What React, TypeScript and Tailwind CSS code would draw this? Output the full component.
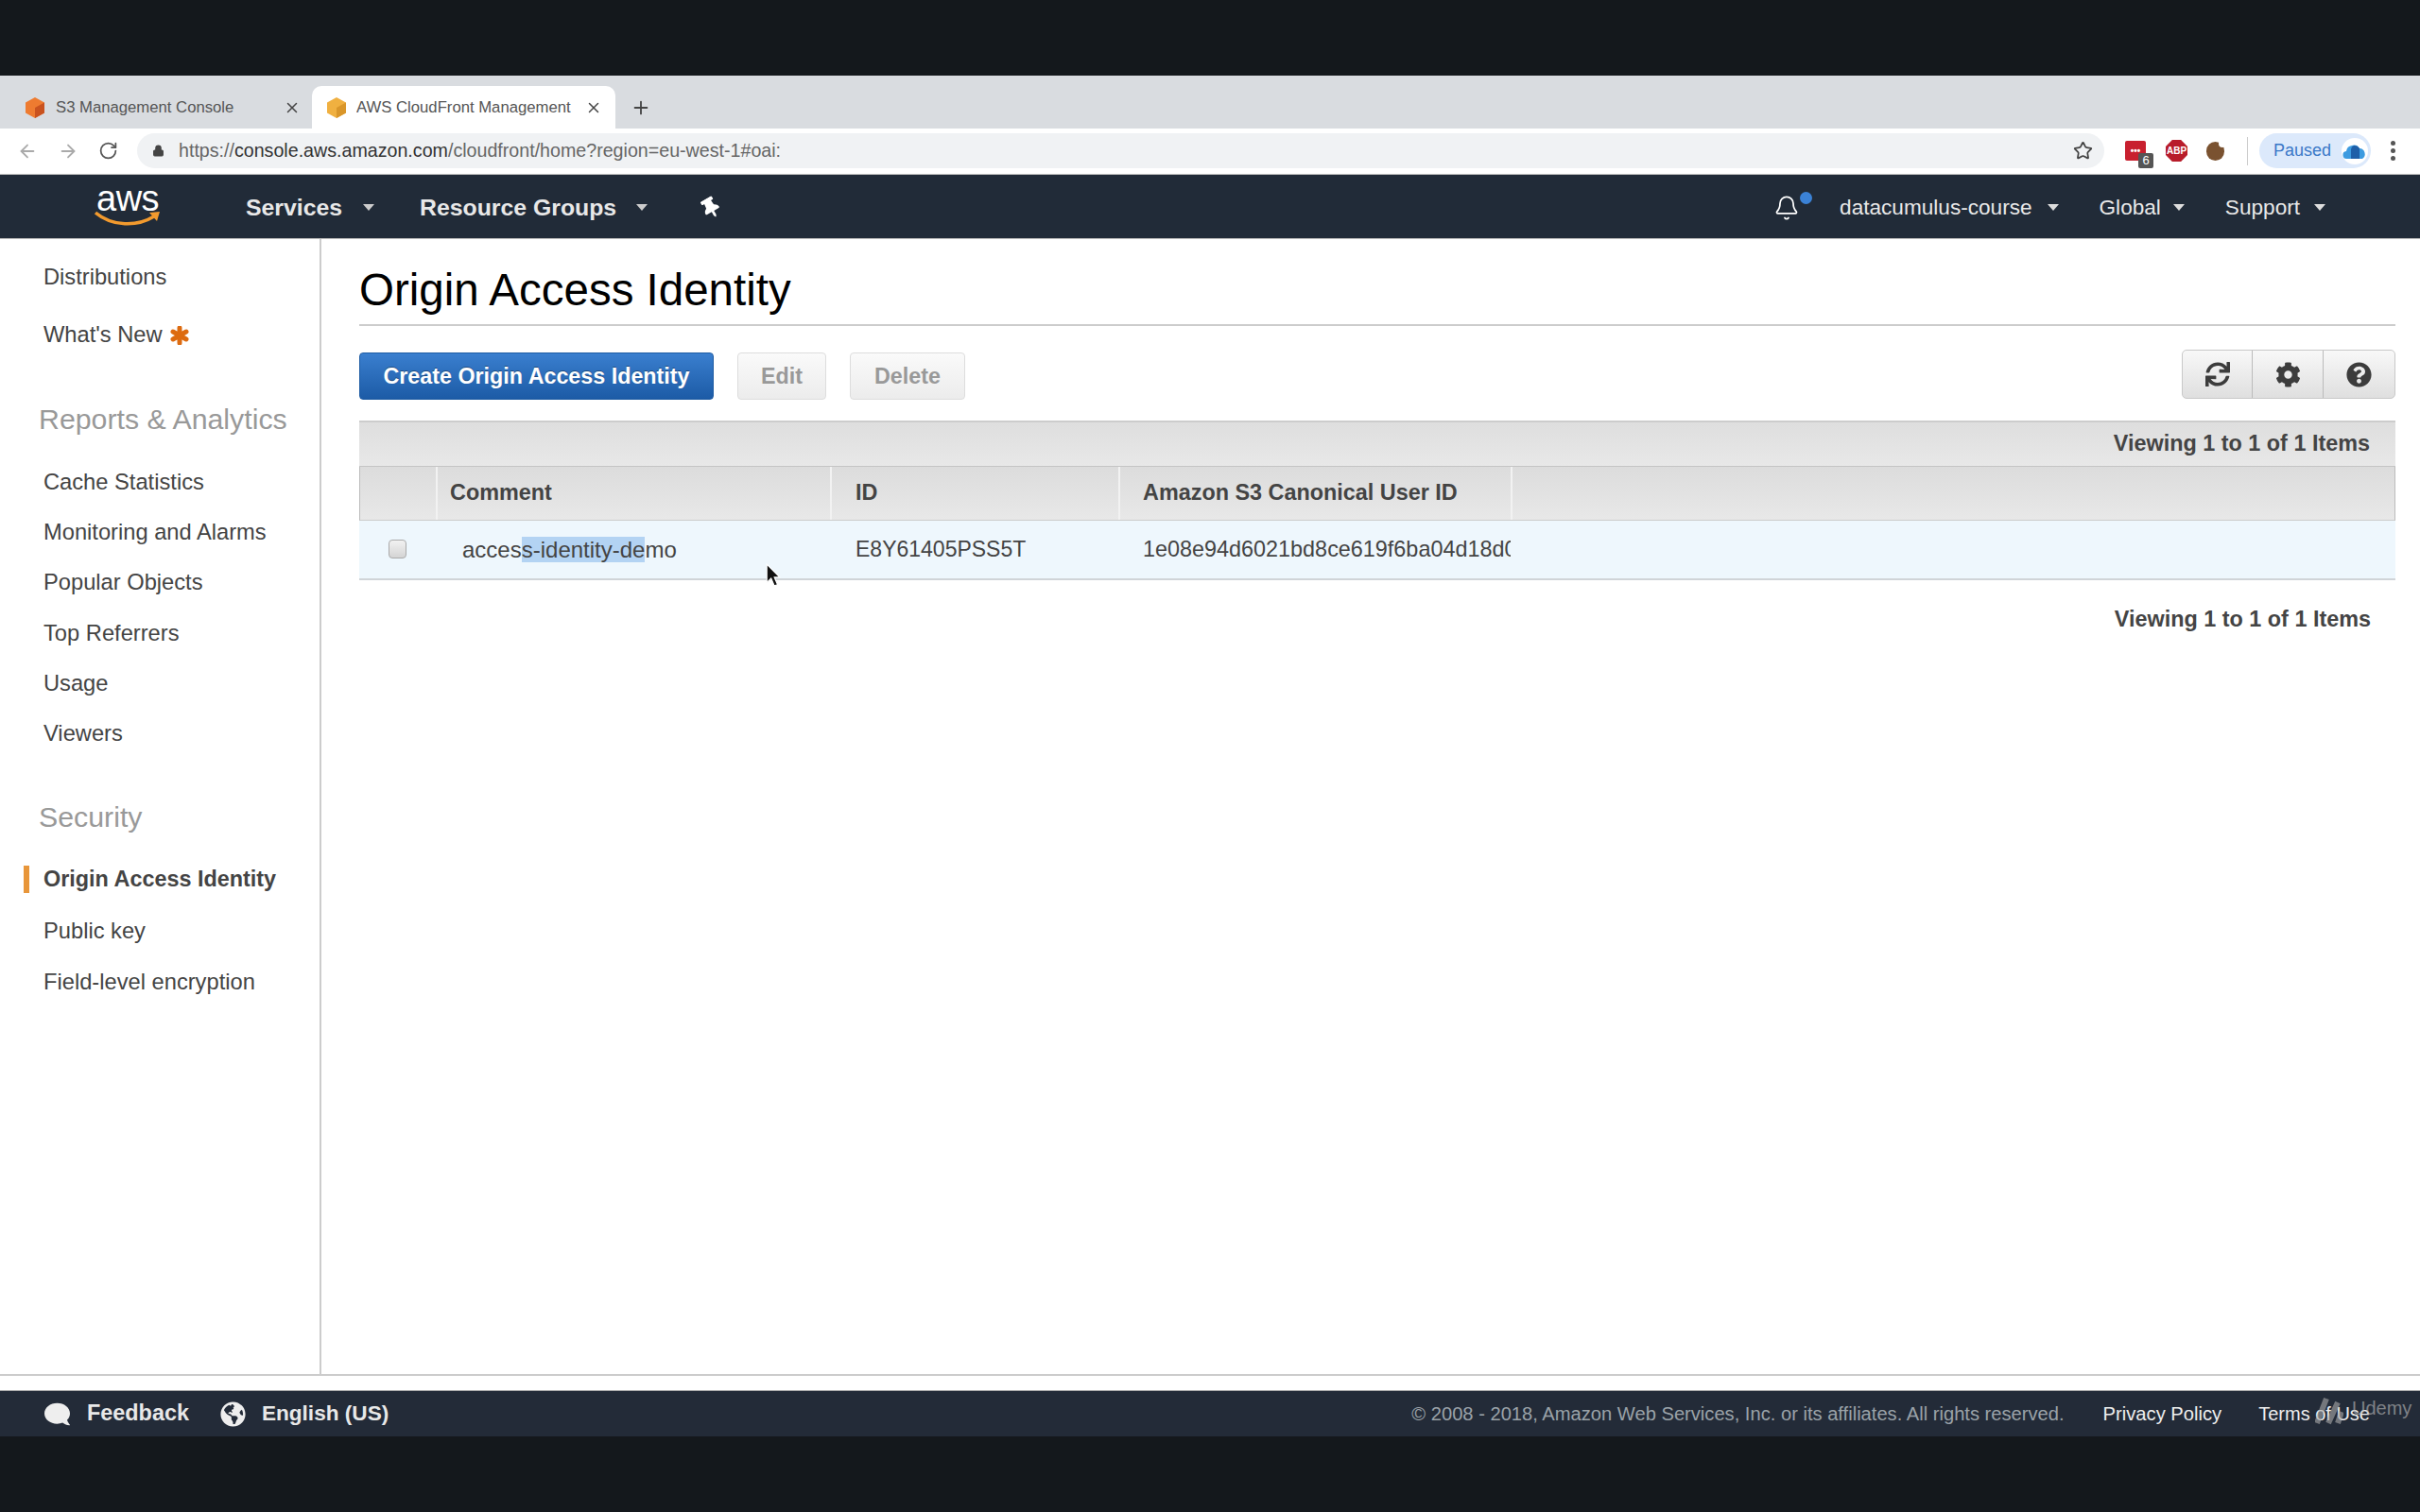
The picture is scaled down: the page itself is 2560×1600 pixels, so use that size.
import { ArrowLeft, ArrowRight, RotateCw, Star, Plus, X, Bell, Lock } from "lucide-react";
import { FaCog, FaComment, FaGlobeAmericas, FaQuestionCircle, FaSync, FaThumbtack } from "react-icons/fa";

function Caret({ className }: { className?: string }) {
    return (
        <svg viewBox="0 0 14 9" className={`w-[14px] h-[9px] ${className ?? ""}`}>
            <path d="M1 1h12L7 8z" fill="currentColor" />
        </svg>
    );
}

function Cube({ color, dark }: { color: string; dark: string }) {
    return (
        <svg viewBox="0 0 22 24" className="w-[22px] h-[24px] shrink-0">
            <path d="M11 1l10 5.500v11L11 23 1 17.500v-11z" fill={color} />
            <path d="M11 12l10-5.500v11L11 23z" fill={dark} />
        </svg>
    );
}

function SideItem({ label, active }: { label: string; active?: boolean }) {
    return (
        <div className={`h-[53.2px] flex items-center pl-[46px] text-[#444] ${active ? "text-[23.4px] font-bold relative" : "text-[23.7px]"}`}>
            {active && <div className="absolute left-[25px] top-[12px] w-[6px] h-[29px] bg-[#e8963a]" />}
            {label}
        </div>
    );
}

const reportItems = ["Cache Statistics", "Monitoring and Alarms", "Popular Objects", "Top Referrers", "Usage", "Viewers"];

export default function App() {
    return (
        <div className="w-[2560px] h-[1600px] overflow-hidden flex flex-col bg-white font-['Liberation_Sans',Arial,sans-serif]">
            <div className="h-[80px] shrink-0 bg-[#14181c]" />

            {/* Browser tabs */}
            <div className="h-[56px] shrink-0 bg-[#d9dce0] flex items-end text-[16.7px] text-[#555]">
                <div className="w-[330px] h-[45px] flex items-center pl-[26px] pr-[12px]">
                    <Cube color="#ee7b30" dark="#c9521f" />
                    <span className="ml-[11px] flex-1">S3 Management Console</span>
                    <X className="w-[18px] h-[18px] text-[#444]" />
                </div>
                <div className="w-[321px] h-[45px] bg-white rounded-t-[10px] flex items-center pl-[15px] pr-[14px]">
                    <Cube color="#f0b040" dark="#d9962a" />
                    <span className="ml-[10px] w-[228px] overflow-hidden whitespace-nowrap">AWS CloudFront Management</span>
                    <X className="ml-auto w-[18px] h-[18px] text-[#444]" />
                </div>
                <div className="h-[45px] flex items-center ml-[16px]">
                    <Plus className="w-[22px] h-[22px] text-[#444]" />
                </div>
            </div>

            {/* Browser toolbar */}
            <div className="h-[49px] shrink-0 bg-white flex items-start pt-[5px] border-b border-[#bbb]">
                <div className="w-[145px] h-[37px] flex items-center pl-[18px] gap-[21px]">
                    <ArrowLeft className="w-[22px] h-[22px] text-[#aaa]" />
                    <ArrowRight className="w-[22px] h-[22px] text-[#aaa]" />
                    <RotateCw className="w-[21px] h-[21px] text-[#555]" />
                </div>
                <div className="w-[2081px] h-[37px] rounded-full bg-[#f0f2f4] flex items-center pl-[16px] pr-[12px]">
                    <Lock className="w-[13px] h-[15px] text-[#444] fill-[#444]" />
                    <span className="ml-[15px] text-[19.65px] text-[#666]">
                        https://<span className="text-[#333]">console.aws.amazon.com</span>/cloudfront/home?region=eu-west-1#oai:
                    </span>
                    <Star className="ml-auto w-[21px] h-[21px] text-[#444]" />
                </div>
                <div className="h-[37px] flex items-center relative ml-[22px] w-[22px]">
                    <div className="w-[22px] h-[21px] bg-[#c8202f] rounded-[2px] flex items-center justify-center text-white text-[10px] font-bold leading-none">•••</div>
                    <div className="absolute left-[14px] top-[21px] w-[16px] h-[16px] bg-[#555] rounded-[2px] text-white text-[13px] leading-[16px] text-center">6</div>
                </div>
                <div className="h-[37px] flex items-center ml-[21px]">
                    <div className="w-[23px] h-[23px] bg-[#b81c2a] text-white text-[10px] font-bold flex items-center justify-center [clip-path:polygon(30%_0,70%_0,100%_30%,100%_70%,70%_100%,30%_100%,0_70%,0_30%)]">ABP</div>
                </div>
                <div className="h-[37px] flex items-center ml-[20px]">
                    <div className="w-[19px] h-[20px] rounded-full bg-[#7a5230] relative">
                        <div className="absolute -right-[2px] -top-[2px] w-[8px] h-[8px] rounded-full bg-white" />
                    </div>
                </div>
                <div className="h-[30px] w-[1px] bg-[#ccc] ml-[24px] mt-[4px]" />
                <div className="ml-[12px] w-[118px] h-[37px] rounded-full bg-[#dce9fb] flex items-center pl-[15px]">
                    <span className="text-[18px] text-[#3a78c8]">Paused</span>
                    <div className="ml-[11px] w-[28px] h-[28px] rounded-full bg-white flex items-center justify-center">
                        <svg viewBox="0 0 26 20" className="w-[26px] h-[20px]">
                            <path d="M5 18a4 4 0 0 1-1-8 7 7 0 0 1 6-6 7 7 0 0 1 8 3 6 6 0 0 1 3 11z" fill="#3d9be0" />
                            <path d="M9 18V8a5 5 0 0 1 3-4 7 7 0 0 1 6 3v11z" fill="#1f5fa8" />
                        </svg>
                    </div>
                </div>
                <div className="h-[37px] ml-[21px] flex flex-col items-center justify-center gap-[3px]">
                    <div className="w-[5px] h-[5px] rounded-full bg-[#555]" />
                    <div className="w-[5px] h-[5px] rounded-full bg-[#555]" />
                    <div className="w-[5px] h-[5px] rounded-full bg-[#555]" />
                </div>
            </div>

            {/* AWS nav */}
            <div className="h-[67px] shrink-0 bg-[#212b38] flex items-center pt-[2px] text-[22.6px] text-[#e8e8e8]">
                <div className="ml-[100px] w-[70px] h-[50px] relative shrink-0 -mt-[2px]">
                    <div className="absolute left-[2px] -top-[6px] text-[38px] leading-[44px] text-white tracking-[-0.5px]">aws</div>
                    <svg viewBox="0 0 70 20" className="absolute left-0 top-[27px] w-[70px] h-[20px]">
                        <path d="M1 4c18 15 44 15 62 4" fill="none" stroke="#f29a2e" strokeWidth="3.5" />
                        <path d="M58 4l11-1-3 10z" fill="#f29a2e" />
                    </svg>
                </div>
                <div className="ml-[90px] font-bold text-[24.8px]">Services</div>
                <Caret className="ml-[21px] text-[#ccc]" />
                <div className="ml-[47px] font-bold text-[24.8px]">Resource Groups</div>
                <Caret className="ml-[20px] text-[#ccc]" />
                <FaThumbtack className="ml-[56px] w-[20px] h-[22px] text-white -rotate-[30deg]" />
                <div className="ml-auto relative">
                    <Bell className="w-[28px] h-[30px] text-white" strokeWidth={1.500} />
                    <div className="absolute left-[28px] -top-[2px] w-[13px] h-[13px] rounded-full bg-[#3b82d6]" />
                </div>
                <div className="ml-[42px]">datacumulus-course</div>
                <Caret className="ml-[15px] text-[#ddd]" />
                <div className="ml-[42px]">Global</div>
                <Caret className="ml-[12px] text-[#ddd]" />
                <div className="ml-[42px]">Support</div>
                <Caret className="ml-[14px] mr-[99px] text-[#ddd]" />
            </div>

            <div className="h-[1px] shrink-0 bg-[#bbb]" />

            {/* Body */}
            <div className="flex-1 flex min-h-0">
                <aside className="w-[340px] shrink-0 border-r-2 border-[#ccc] pt-[14px]">
                    <SideItem label="Distributions" />
                    <div className="mt-[8px] h-[53px] flex items-center pl-[46px] text-[23.7px] text-[#444]">
                        What's New
                        <svg viewBox="0 0 20 20" className="ml-[8px] w-[20px] h-[20px]">
                            <path d="M10 2v16M3 6l14 8M17 6L3 14" stroke="#dd6b10" strokeWidth="5" strokeLinecap="round" />
                        </svg>
                    </div>
                    <div className="mt-[43px] h-[40px] flex items-center pl-[41px] text-[30.3px] text-[#999]">Reports &amp; Analytics</div>
                    <div className="mt-[20px]">
                        {reportItems.map(item => (
                            <SideItem key={item} label={item} />
                        ))}
                    </div>
                    <div className="mt-[41px] h-[40px] flex items-center pl-[41px] text-[30.3px] text-[#999]">Security</div>
                    <div className="mt-[20px]">
                        <SideItem label="Origin Access Identity" active />
                    </div>
                    <div className="mt-[2px]">
                        <SideItem label="Public key" />
                        <SideItem label="Field-level encryption" />
                    </div>
                </aside>

                <main className="flex-1 pl-[40px] pr-[26px]">
                    <h1 className="pt-[30px] pb-[12px] text-[47.5px] leading-[48px] text-black border-b-2 border-[#ccc]">Origin Access Identity</h1>

                    <div className="mt-[25px] flex justify-between items-start">
                        <div className="mt-[3px] flex text-[23.3px] font-bold">
                            <button className="w-[375px] h-[50px] rounded-[4px] bg-gradient-to-b from-[#3a7fcf] to-[#1c5ba6] border border-[#1f5ca3] text-white [text-shadow:0_-1px_0_rgba(0,0,0,0.35)]">Create Origin Access Identity</button>
                            <button className="ml-[25px] w-[94px] h-[50px] rounded-[4px] bg-gradient-to-b from-[#fafafa] to-[#ececec] border border-[#ddd] text-[#999]">Edit</button>
                            <button className="ml-[25px] w-[122px] h-[50px] rounded-[4px] bg-gradient-to-b from-[#fafafa] to-[#ececec] border border-[#ddd] text-[#999]">Delete</button>
                        </div>
                        <div className="w-[226px] h-[52px] flex rounded-[5px] border border-[#c8c8c8] bg-gradient-to-b from-[#f8f8f8] to-[#dfdfdf] text-[#3c3c3c]">
                            <div className="flex-1 flex items-center justify-center border-r border-[#bbb]"><FaSync className="w-[26px] h-[26px]" /></div>
                            <div className="w-[75px] flex items-center justify-center border-r border-[#bbb]"><FaCog className="w-[27px] h-[27px]" /></div>
                            <div className="w-[75px] flex items-center justify-center"><FaQuestionCircle className="w-[27px] h-[27px]" /></div>
                        </div>
                    </div>

                    {/* Table */}
                    <div className="mt-[22px] text-[23.4px] text-[#444]">
                        <div className="h-[49px] border-t-2 border-[#ccc] border-b border-b-[#c4c4c4] bg-gradient-to-b from-[#dedede] to-[#e8e8e8] flex items-center justify-end pr-[27px] font-bold">
                            Viewing 1 to 1 of 1 Items
                        </div>
                        <div className="h-[57px] flex font-bold border-x border-[#bbb] border-b border-b-[#ccc] bg-gradient-to-b from-[#dcdcdc] to-[#e8e8e8]">
                            <div className="w-[82px] border-r-2 border-r-[#f2f2f2]" />
                            <div className="w-[417px] flex items-center pl-[13px] border-r-2 border-r-[#f2f2f2]">Comment</div>
                            <div className="w-[305px] flex items-center pl-[25px] border-r-2 border-r-[#f2f2f2]">ID</div>
                            <div className="w-[415px] flex items-center pl-[24px] border-r-2 border-r-[#f2f2f2]">Amazon S3 Canonical User ID</div>
                        </div>
                        <div className="h-[63px] flex items-center bg-[#eef7fd] border-b-2 border-[#d0d4d8] relative font-normal">
                            <div className="w-[82px] flex justify-center pr-[2px] -mt-[2px]">
                                <div className="w-[19px] h-[20px] rounded-[4px] border border-[#aaa] bg-gradient-to-b from-[#f2f2f2] to-[#d4d4d4]" />
                            </div>
                            <div className="w-[416px] pl-[27px] text-[24px] whitespace-nowrap">
                                acces<span className="bg-[#b3d3f3]">s-identity-de</span>mo
                            </div>
                            <div className="w-[305px] pl-[27px] text-[23px]">E8Y61405PSS5T</div>
                            <div className="w-[415px] pl-[26px] text-[23.4px] overflow-hidden whitespace-nowrap">1e08e94d6021bd8ce619f6ba04d18d0e</div>
                            {/* mouse pointer */}
                            <svg viewBox="0 0 14 22" className="absolute left-[430px] top-[45px] w-[16px] h-[25px]">
                                <path d="M1 1v17l4-4 3 7 3-1-3-7h5z" fill="#111" stroke="#fff" strokeWidth="1" />
                            </svg>
                        </div>
                        <div className="h-[83px] flex items-center justify-end pr-[26px] font-bold">Viewing 1 to 1 of 1 Items</div>
                    </div>
                </main>
            </div>

            <div className="h-[2px] shrink-0 bg-[#ccc]" />
            <div className="h-[15px] shrink-0 bg-white" />

            {/* Footer */}
            <div className="h-[49px] shrink-0 bg-[#232b38] border-t border-[#aaa] flex items-center text-[23.4px] relative">
                <FaComment className="ml-[46px] w-[29px] h-[27px] text-[#eee] -scale-x-100" />
                <span className="ml-[17px] font-bold text-[#e8e8e8]">Feedback</span>
                <FaGlobeAmericas className="ml-[33px] w-[27px] h-[27px] text-[#eee]" />
                <span className="ml-[17px] font-bold text-[#e8e8e8] text-[22.6px]">English (US)</span>
                <span className="ml-auto text-[20.15px] text-[#9aa2a8]">© 2008 - 2018, Amazon Web Services, Inc. or its affiliates. All rights reserved.</span>
                <span className="ml-[41px] text-[20.2px] text-[#eee]">Privacy Policy</span>
                <span className="ml-[39px] mr-[53px] text-[20px] text-[#eee]">Terms of Use</span>
                {/* course watermark */}
                <div className="absolute left-[2449px] top-[4px] flex items-center opacity-60">
                    <svg viewBox="0 0 30 36" className="w-[30px] h-[36px]">
                        <path d="M2 30L12 4M14 30L24 8M24 30l4-12" fill="none" stroke="#aaa" strokeWidth="6" />
                    </svg>
                    <span className="ml-[9px] -mt-[8px] text-[20px] text-[#bbb]">Udemy</span>
                </div>
            </div>

            <div className="h-[80px] shrink-0 bg-[#14181c]" />
        </div>
    );
}
